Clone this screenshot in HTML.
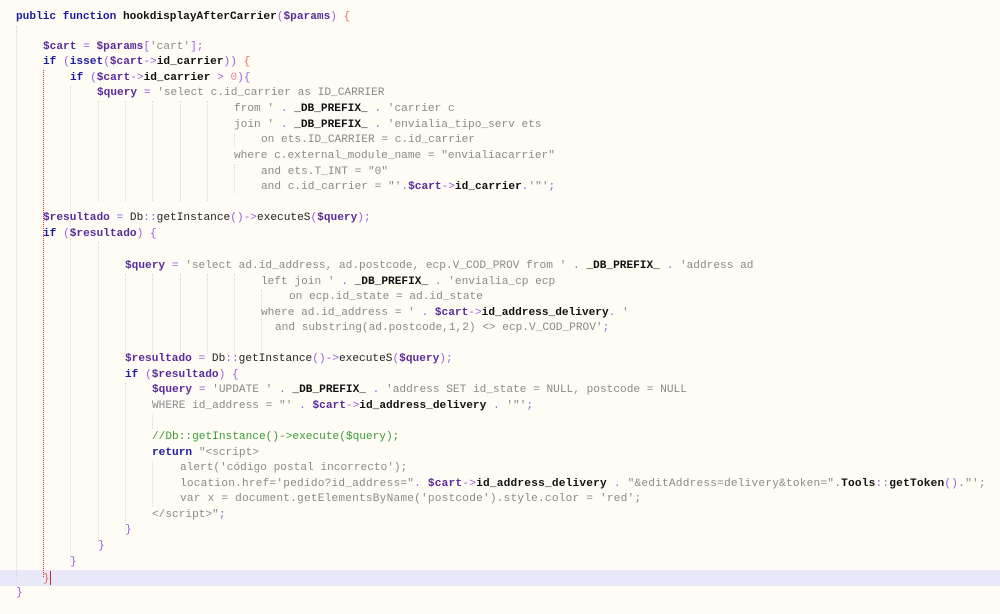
<!DOCTYPE html>
<html><head><meta charset="utf-8"><style>
body{margin:0;width:1000px;height:614px;background:#fffcf5;overflow:hidden;position:relative;font-family:"Liberation Mono",monospace;font-size:11.15px;color:#222}
.l{position:absolute;white-space:pre;line-height:15px;height:15px}
.k{color:#1c1ca0;font-weight:bold}
.v{color:#5a2b9a;font-weight:bold}
.o{color:#9a5fe0}
.s{color:#8a8a8a}
.b{color:#111;font-weight:bold}
.c{color:#3a9a3a}
.n{color:#e08aa0}
.r{color:#e07050}
.g{position:absolute;width:0;border-left:1px dotted #d8d8d8}
</style></head><body>
<div style="position:absolute;left:0;top:570px;width:1000px;height:16px;background:#e8e8f8"></div>
<div class="g" style="left:16px;top:26px;height:560px"></div>
<div style="position:absolute;left:43px;top:70px;height:508px;width:1px;background:repeating-linear-gradient(#f03030 0 1px,transparent 1px 2px)"></div>
<div class="g" style="left:70px;top:86px;height:476px"></div>
<div class="g" style="left:98px;top:101px;height:100px"></div>
<div class="g" style="left:98px;top:242px;height:300px"></div>
<div class="g" style="left:125px;top:101px;height:100px"></div>
<div class="g" style="left:152px;top:101px;height:100px"></div>
<div class="g" style="left:180px;top:101px;height:100px"></div>
<div class="g" style="left:207px;top:101px;height:100px"></div>
<div class="g" style="left:125px;top:274px;height:80px"></div>
<div class="g" style="left:152px;top:274px;height:80px"></div>
<div class="g" style="left:180px;top:274px;height:80px"></div>
<div class="g" style="left:207px;top:274px;height:80px"></div>
<div class="g" style="left:234px;top:274px;height:80px"></div>
<div class="g" style="left:261px;top:290px;height:64px"></div>
<div class="g" style="left:234px;top:133px;height:15px"></div>
<div class="g" style="left:234px;top:164px;height:30px"></div>
<div class="g" style="left:125px;top:383px;height:148px"></div>
<div class="g" style="left:152px;top:414px;height:15px"></div>
<div class="g" style="left:152px;top:461px;height:45px"></div>

<div class="l" style="top:10px;left:16px"><span class="k">public function</span> <span class="b">hookdisplayAfterCarrier</span><span class="o">(</span><span class="v">$params</span><span class="o">)</span> <span class="r">{</span></div>
<div class="l" style="top:40px;left:43px"><span class="v">$cart</span> <span class="o">=</span> <span class="v">$params</span><span class="o">[</span><span class="s">'cart'</span><span class="o">];</span></div>
<div class="l" style="top:55px;left:43px"><span class="k">if</span> <span class="o">(</span><span class="k">isset</span><span class="o">(</span><span class="v">$cart</span><span class="o">-&gt;</span><span class="b">id_carrier</span><span class="o">))</span> <span class="r">{</span></div>
<div class="l" style="top:71px;left:70px"><span class="k">if</span> <span class="o">(</span><span class="v">$cart</span><span class="o">-&gt;</span><span class="b">id_carrier</span> <span class="o">&gt;</span> <span class="n">0</span><span class="o">){</span></div>
<div class="l" style="top:86px;left:97px"><span class="v">$query</span> <span class="o">=</span> <span class="s">'select c.id_carrier as ID_CARRIER</span></div>
<div class="l" style="top:102px;left:234px"><span class="s">from '</span> <span class="o">.</span> <span class="b">_DB_PREFIX_</span> <span class="o">.</span> <span class="s">'carrier c</span></div>
<div class="l" style="top:118px;left:234px"><span class="s">join '</span> <span class="o">.</span> <span class="b">_DB_PREFIX_</span> <span class="o">.</span> <span class="s">'envialia_tipo_serv ets</span></div>
<div class="l" style="top:133px;left:261px"><span class="s">on ets.ID_CARRIER = c.id_carrier</span></div>
<div class="l" style="top:149px;left:234px"><span class="s">where c.external_module_name = "envialiacarrier"</span></div>
<div class="l" style="top:165px;left:261px"><span class="s">and ets.T_INT = "0"</span></div>
<div class="l" style="top:180px;left:261px"><span class="s">and c.id_carrier = "'</span><span class="o">.</span><span class="v">$cart</span><span class="o">-&gt;</span><span class="b">id_carrier</span><span class="o">.</span><span class="s">'"'</span><span class="o">;</span></div>
<div class="l" style="top:211px;left:43px"><span class="v">$resultado</span> <span class="o">=</span> Db<span class="o">::</span>getInstance<span class="o">()-&gt;</span>executeS<span class="o">(</span><span class="v">$query</span><span class="o">);</span></div>
<div class="l" style="top:227px;left:43px"><span class="k">if</span> <span class="o">(</span><span class="v">$resultado</span><span class="o">)</span> <span class="o">{</span></div>
<div class="l" style="top:259px;left:125px"><span class="v">$query</span> <span class="o">=</span> <span class="s">'select ad.id_address, ad.postcode, ecp.V_COD_PROV from '</span> <span class="o">.</span> <span class="b">_DB_PREFIX_</span> <span class="o">.</span> <span class="s">'address ad</span></div>
<div class="l" style="top:275px;left:261px"><span class="s">left join '</span> <span class="o">.</span> <span class="b">_DB_PREFIX_</span> <span class="o">.</span> <span class="s">'envialia_cp ecp</span></div>
<div class="l" style="top:290px;left:289px"><span class="s">on ecp.id_state = ad.id_state</span></div>
<div class="l" style="top:306px;left:261px"><span class="s">where ad.id_address = '</span> <span class="o">.</span> <span class="v">$cart</span><span class="o">-&gt;</span><span class="b">id_address_delivery</span><span class="o">.</span> <span class="s">'</span></div>
<div class="l" style="top:321px;left:275px"><span class="s">and substring(ad.postcode,1,2) &lt;&gt; ecp.V_COD_PROV'</span><span class="o">;</span></div>
<div class="l" style="top:352px;left:125px"><span class="v">$resultado</span> <span class="o">=</span> Db<span class="o">::</span>getInstance<span class="o">()-&gt;</span>executeS<span class="o">(</span><span class="v">$query</span><span class="o">);</span></div>
<div class="l" style="top:368px;left:125px"><span class="k">if</span> <span class="o">(</span><span class="v">$resultado</span><span class="o">)</span> <span class="o">{</span></div>
<div class="l" style="top:383px;left:152px"><span class="v">$query</span> <span class="o">=</span> <span class="s">'UPDATE '</span> <span class="o">.</span> <span class="b">_DB_PREFIX_</span> <span class="o">.</span> <span class="s">'address SET id_state = NULL, postcode = NULL</span></div>
<div class="l" style="top:399px;left:152px"><span class="s">WHERE id_address = "'</span> <span class="o">.</span> <span class="v">$cart</span><span class="o">-&gt;</span><span class="b">id_address_delivery</span> <span class="o">.</span> <span class="s">'"'</span><span class="o">;</span></div>
<div class="l" style="top:430px;left:152px"><span class="c">//Db::getInstance()-&gt;execute($query);</span></div>
<div class="l" style="top:446px;left:152px"><span class="k">return</span> <span class="s">"&lt;script&gt;</span></div>
<div class="l" style="top:461px;left:180px"><span class="s">alert('código postal incorrecto');</span></div>
<div class="l" style="top:477px;left:180px;letter-spacing:0.2px"><span class="s">location.href='pedido?id_address="</span><span class="o">.</span> <span class="v">$cart</span><span class="o">-&gt;</span><span class="b">id_address_delivery</span> <span class="o">.</span> <span class="s">"&amp;editAddress=delivery&amp;token="</span><span class="o">.</span><span class="b">Tools</span><span class="o">::</span><span class="b">getToken</span><span class="o">()</span><span class="o">.</span><span class="s">"';</span></div>
<div class="l" style="top:492px;left:180px;letter-spacing:0.2px"><span class="s">var x = document.getElementsByName('postcode').style.color = 'red';</span></div>
<div class="l" style="top:508px;left:152px"><span class="s">&lt;/script&gt;"</span><span class="o">;</span></div>
<div class="l" style="top:523px;left:125px"><span class="o">}</span></div>
<div class="l" style="top:539px;left:98px"><span class="o">}</span></div>
<div class="l" style="top:555px;left:70px"><span class="o">}</span></div>
<div class="l" style="top:571px;left:43px"><span class="r">}</span><span style="display:inline-block;width:1px;height:14px;background:#c03030;vertical-align:middle"></span></div>
<div class="l" style="top:586px;left:16px"><span class="o">}</span></div>
</body></html>
